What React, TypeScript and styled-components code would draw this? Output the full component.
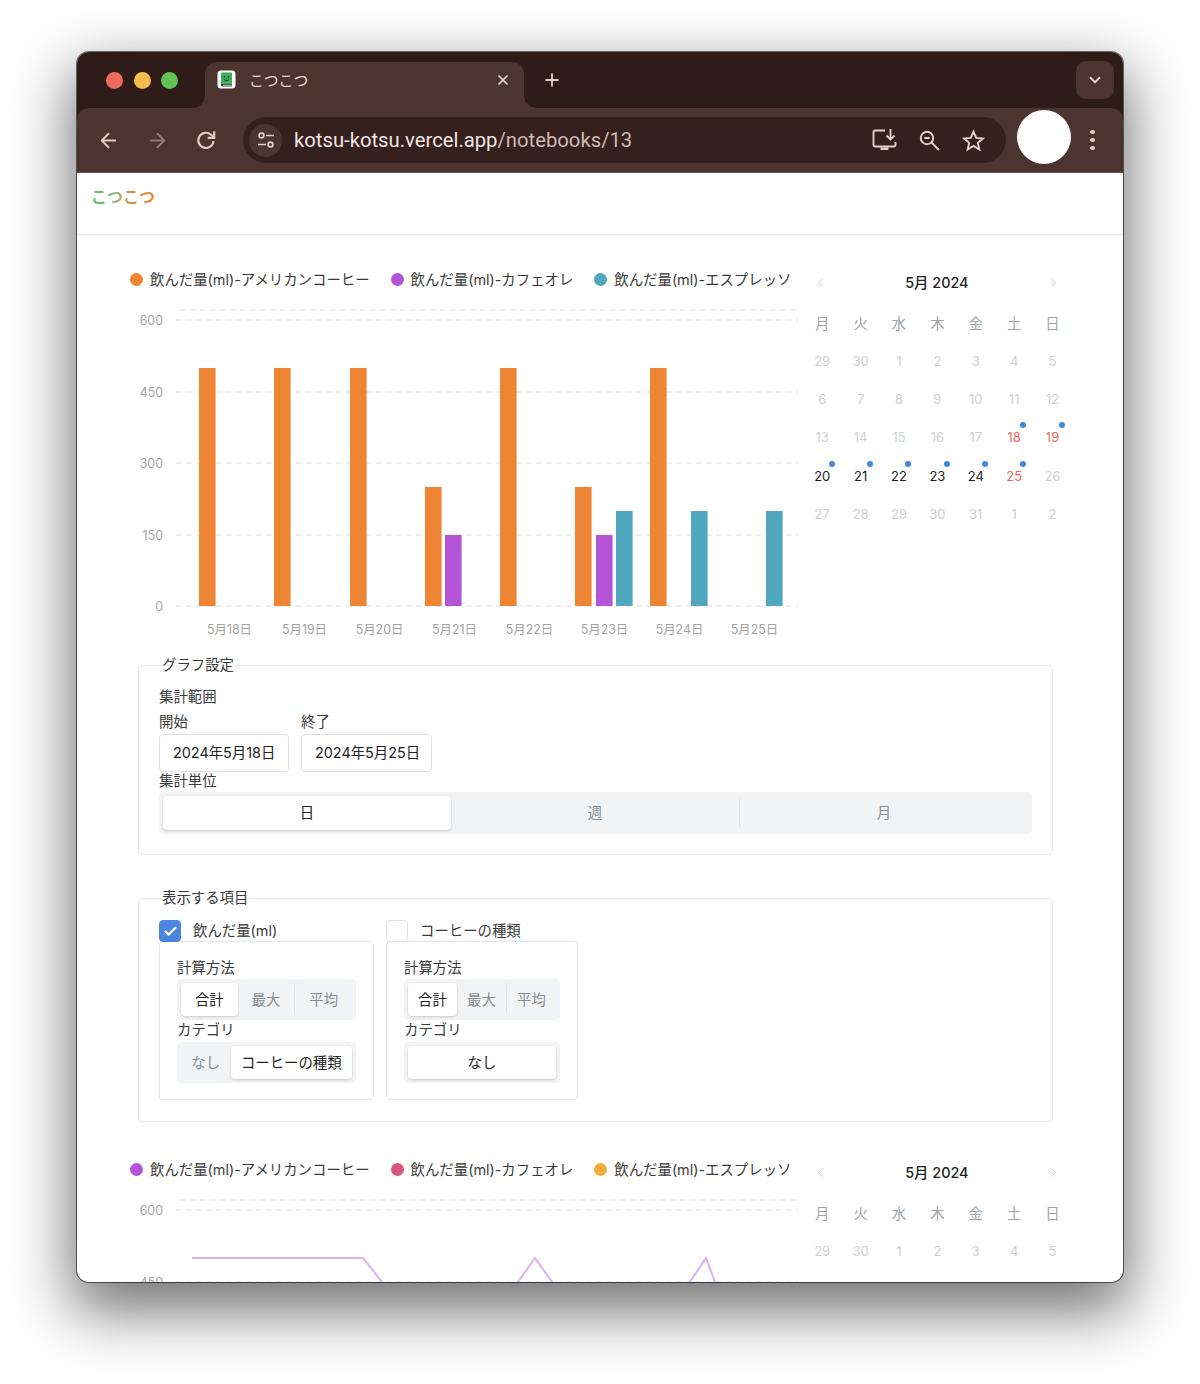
import type { ReactNode } from 'react';
import styled, { createGlobalStyle } from 'styled-components';
import {
  ArrowLeft,
  ArrowRight,
  Check,
  ChevronDown,
  ChevronLeft,
  ChevronRight,
  Plus,
  X,
} from 'lucide-react';

const FONT = `Inter, "Noto Sans CJK JP", sans-serif`;

const ORANGE = '#ee8535';
const PURPLE = '#b455d8';
const TEAL = '#4fa8bd';
const PINK = '#d9577f';
const YELLOW = '#f0ad3d';
const CHROME_DARK = '#2f1b18';
const CHROME = '#4c3431';

const GlobalStyle = createGlobalStyle`
  html, body {
    margin: 0;
    padding: 0;
    background: #ffffff;
    font-family: ${FONT};
  }
  * {
    box-sizing: border-box;
  }
`;

const Page = styled.div`
  width: 1200px;
  height: 1384px;
  padding: 52px 77px 102px;
  overflow: hidden;
`;

const BrowserWindow = styled.div`
  height: 1230px;
  border-radius: 12px;
  overflow: hidden;
  background: #ffffff;
  box-shadow: 0 0 0 1px rgba(0, 0, 0, 0.55), 0 24px 60px 6px rgba(0, 0, 0, 0.55);
`;

const ChromeFrame = styled.div`
  background: ${CHROME_DARK};
`;

const TitleBar = styled.div`
  height: 56px;
  display: flex;
  align-items: flex-start;
  padding: 10px 9px 0 29px;
`;

const Lights = styled.div`
  display: flex;
  gap: 10.5px;
  width: 99px;
  padding-top: 9.5px;
`;

const Light = styled.span<{ $color: string }>`
  width: 17px;
  height: 17px;
  border-radius: 50%;
  background: ${props => props.$color};
`;

const Tab = styled.div`
  position: relative;
  width: 319px;
  height: 46px;
  background: ${CHROME};
  border-radius: 12px 12px 0 0;
  display: flex;
  align-items: center;
  padding: 0 13px 11px 12px;
  color: #e8d8d4;

  &::before,
  &::after {
    content: '';
    position: absolute;
    bottom: 0;
    width: 12px;
    height: 12px;
  }
  &::before {
    left: -12px;
    background: radial-gradient(circle at 0 0, ${CHROME_DARK} 11.5px, ${CHROME} 12px);
  }
  &::after {
    right: -12px;
    background: radial-gradient(circle at 100% 0, ${CHROME_DARK} 11.5px, ${CHROME} 12px);
  }
`;

const TabTitle = styled.span`
  flex: 1;
  margin-left: 13px;
  font-size: 14.8px;
`;

const NewTab = styled.div`
  margin-left: 18px;
  height: 36px;
  display: flex;
  align-items: center;
  color: #e3cfca;
`;

const Spacer = styled.div`
  flex: 1;
`;

const ExpandButton = styled.div`
  width: 38px;
  height: 38px;
  margin-top: -1px;
  border-radius: 10px;
  background: ${CHROME};
  color: #e8d8d4;
  display: flex;
  align-items: center;
  justify-content: center;
`;

const Toolbar = styled.div`
  height: 65px;
  background: ${CHROME};
  border-bottom: 1px solid #6b5754;
  display: flex;
  align-items: center;
  padding: 0 19px;
  color: #e3cfca;
  border-radius: 12px 12px 0 0;
`;

const NavButton = styled.div<{ $dim?: boolean }>`
  width: 24px;
  height: 24px;
  margin-right: 25px;
  color: ${props => (props.$dim ? '#8f7a76' : '#e3c9c2')};
  display: flex;
  align-items: center;
  justify-content: center;
`;

const Omnibox = styled.div`
  width: 763px;
  height: 46px;
  border-radius: 23px;
  background: #35201e;
  display: flex;
  align-items: center;
  padding: 0 21px 0 6px;
`;

const SiteChip = styled.div`
  width: 33px;
  height: 33px;
  border-radius: 50%;
  background: ${CHROME};
  display: flex;
  align-items: center;
  justify-content: center;
`;

const Url = styled.div`
  flex: 1;
  margin-left: 12px;
  font-family: Roboto, sans-serif;
  font-size: 20.25px;
  color: #f2e6e3;
  white-space: nowrap;
`;

const UrlPath = styled.span`
  color: #cdb8b3;
`;

const OmniIcons = styled.div`
  display: flex;
  align-items: center;
  gap: 21px;
  color: #e3cfca;
`;

const Avatar = styled.div`
  width: 54px;
  height: 54px;
  margin: -6px 0 0 11px;
  border-radius: 50%;
  background: #ffffff;
`;

const MenuDots = styled.div`
  margin-left: 19px;
  display: flex;
  flex-direction: column;
  gap: 3.5px;
`;

const MenuDot = styled.span`
  width: 4.5px;
  height: 4.5px;
  border-radius: 50%;
  background: #e3c9c2;
`;

const SiteHeader = styled.header`
  height: 62px;
  padding: 13px 14px 0;
  border-bottom: 1px solid #e5e7eb;
`;

const Logo = styled.span`
  font-family: 'Noto Sans CJK JP', sans-serif;
  font-size: 16px;
  line-height: 20px;
  font-weight: 700;
  background: linear-gradient(90deg, #5cc05c 0%, #8fb98a 35%, #c69a4a 60%, ${ORANGE} 100%);
  -webkit-background-clip: text;
  background-clip: text;
  color: transparent;
  display: inline-block;
`;

const Main = styled.main`
  padding: 34px 52px 0 53px;
`;

const ChartRow = styled.section`
  display: flex;
  height: 376px;
`;

const ChartColumn = styled.div`
  width: 670px;
`;

const Legend = styled.div`
  display: flex;
  height: 21px;
  gap: 21px;
  font-size: 14.4px;
  line-height: 20px;
  color: #3a3a3a;
`;

const LegendItem = styled.div`
  display: flex;
  align-items: center;
  gap: 7px;
  white-space: nowrap;
`;

const LegendDot = styled.span<{ $color: string }>`
  width: 13px;
  height: 13px;
  border-radius: 50%;
  background: ${props => props.$color};
`;

const ChartSvg = styled.svg`
  display: block;
  margin-top: 10px;

  text {
    font-family: ${FONT};
    font-size: 12.4px;
    fill: #a3a3a3;
  }
`;

const Calendar = styled.div`
  width: 269px;
  margin-left: 3px;
`;

const CalendarHead = styled.div`
  display: flex;
  align-items: center;
  justify-content: space-between;
  height: 26px;
  padding: 0 11px 0 10px;
  color: #c4c8cc;
  margin-bottom: 20px;
`;

const CalendarTitle = styled.span`
  margin-bottom: 2px;
  font-size: 14.4px;
  font-weight: 500;
  color: #222222;
`;

const CalendarGrid = styled.div`
  display: grid;
  grid-template-columns: repeat(7, 38.4px);
  grid-auto-rows: 38.4px;
  margin-top: -1px;
`;

const Weekday = styled.div`
  font-size: 14.4px;
  color: #9ea3a8;
  text-align: center;
  line-height: 18px;
  height: 18px;
`;

const WeekdayRow = styled.div`
  display: grid;
  grid-template-columns: repeat(7, 38.4px);
  margin-bottom: 9.5px;
`;

type DayKind = 'out' | 'in' | 'weekend';

const Day = styled.div<{ $kind: DayKind }>`
  position: relative;
  display: flex;
  align-items: center;
  justify-content: center;
  font-size: 13px;
  color: ${props =>
    props.$kind === 'out' ? '#cdd0d3' : props.$kind === 'weekend' ? '#f0695a' : '#222222'};
`;

const DayDot = styled.span`
  position: absolute;
  top: 4px;
  left: 25.5px;
  width: 6px;
  height: 6px;
  border-radius: 50%;
  background: #3f86e4;
`;

const Settings = styled.fieldset<{ $height: number; $top: number }>`
  margin: ${props => props.$top}px 0 0 8px;
  width: 915px;
  height: ${props => props.$height}px;
  min-width: 0;
  padding: 0 20px;
  border: 1px solid #e5e7eb;
  border-radius: 4px;
`;

const SettingsTitle = styled.legend`
  margin-left: 3px;
  padding: 0 1px 0 0;
  font-size: 14.4px;
  line-height: 20px;
  color: #3a3a3a;
`;

const FieldLabel = styled.div<{ $h?: number }>`
  font-size: 14.4px;
  line-height: ${props => props.$h ?? 20}px;
  height: ${props => Math.max(props.$h ?? 20, 20)}px;
  color: #3a3a3a;
`;

const RangeGroup = styled.div`
  padding-top: 10px;
`;

const DateFields = styled.div`
  display: flex;
  gap: 12px;
`;

const DateInput = styled.div<{ $width: number }>`
  width: ${props => props.$width}px;
  height: 38px;
  padding-left: 13px;
  border: 1px solid #dee2e6;
  border-radius: 4px;
  font-size: 14.4px;
  line-height: 36px;
  color: #222222;
  white-space: nowrap;
`;

const Segmented = styled.div`
  display: flex;
  padding: 4px;
  border-radius: 4px;
  background: #f1f3f5;
`;

const Segment = styled.div<{ $active?: boolean; $sep?: boolean }>`
  flex: 1 1 auto;
  height: 33px;
  padding: 0 10px;
  border-radius: 4px;
  font-size: 14.4px;
  line-height: 33px;
  text-align: center;
  white-space: nowrap;
  color: ${props => (props.$active ? '#222222' : '#868e96')};
  background: ${props => (props.$active ? '#ffffff' : 'transparent')};
  box-shadow: ${props =>
    props.$active ? '0 1px 3px rgba(0, 0, 0, 0.1), 0 1px 2px rgba(0, 0, 0, 0.08)' : 'none'};
  border-left: ${props => (props.$sep ? '1px solid #e2e5e8' : 'none')};
`;

const FullSegment = styled(Segment)`
  flex: 1 1 0;
  height: 34px;
`;

const ItemColumns = styled.div`
  display: flex;
  gap: 12px;
  padding-top: 12px;
`;

const ItemColumn = styled.div<{ $width: number }>`
  width: ${props => props.$width}px;
`;

const CheckRow = styled.div`
  display: flex;
  align-items: center;
  gap: 12px;
  height: 22px;
  font-size: 14.4px;
  line-height: 20px;
  color: #3a3a3a;
`;

const CheckBox = styled.span<{ $checked?: boolean }>`
  width: 22px;
  height: 22px;
  border-radius: 4px;
  display: flex;
  align-items: center;
  justify-content: center;
  color: #ffffff;
  background: ${props => (props.$checked ? '#4a86e0' : '#ffffff')};
  border: 1px solid ${props => (props.$checked ? '#4a86e0' : '#dee2e6')};
`;

const ItemCard = styled.div`
  margin-top: -1px;
  height: 159px;
  padding: 16px 17px 0;
  border: 1px solid #e5e7eb;
  border-radius: 4px;
`;

const CardLabel = styled(FieldLabel)`
  height: 21.25px;
`;

const SecondRow = styled(ChartRow)`
  margin-top: 37px;
`;

type BarData = { x: number; top: number; color: string };

const BARS: BarData[] = [
  { x: 69, top: 368, color: ORANGE },
  { x: 144, top: 368, color: ORANGE },
  { x: 220, top: 368, color: ORANGE },
  { x: 295, top: 487, color: ORANGE },
  { x: 315, top: 535, color: PURPLE },
  { x: 370, top: 368, color: ORANGE },
  { x: 445, top: 487, color: ORANGE },
  { x: 466, top: 535, color: PURPLE },
  { x: 486, top: 511, color: TEAL },
  { x: 520, top: 368, color: ORANGE },
  { x: 561, top: 511, color: TEAL },
  { x: 636, top: 511, color: TEAL },
];

const Y_TICKS = [
  { label: '600', y: 20 },
  { label: '450', y: 92 },
  { label: '300', y: 163 },
  { label: '150', y: 235 },
  { label: '0', y: 306 },
];

const X_LABELS = ['5月18日', '5月19日', '5月20日', '5月21日', '5月22日', '5月23日', '5月24日', '5月25日'];

const GRID_LINE = { stroke: '#d9dce1', strokeWidth: 1.2, strokeDasharray: '5.5 4.5' };

// svg origin sits at page (130, 300)
const ChartFrame = ({ ticks, children }: { ticks: number; children?: ReactNode }) => (
  <ChartSvg width={670} height={345} viewBox="0 0 670 345">
    <line x1={50} x2={668} y1={10} y2={10} {...GRID_LINE} />
    {Y_TICKS.slice(0, ticks).map(t => (
      <g key={t.label}>
        <line x1={46} x2={668} y1={t.y} y2={t.y} {...GRID_LINE} />
        <text x={33} y={t.y + 4.5} textAnchor="end">
          {t.label}
        </text>
      </g>
    ))}
    {children}
  </ChartSvg>
);

const BarChart = () => (
  <ChartFrame ticks={5}>
    {BARS.map(b => (
      <rect key={b.x} x={b.x} y={b.top - 300} width={16.6} height={606 - b.top} fill={b.color} />
    ))}
    {X_LABELS.map((label, i) => (
      <text key={label} x={99.5 + i * 75} y={334} textAnchor="middle">
        {label}
      </text>
    ))}
  </ChartFrame>
);

const LineChart = () => (
  <ChartFrame ticks={2}>
    <polyline
      fill="none"
      stroke="#dfb0ee"
      strokeWidth={2}
      points="62,68 233,68 290,140 348,148 405,68 462,148 519,153 576,68 633,220"
    />
  </ChartFrame>
);

const LEGEND_LABELS = [
  '飲んだ量(ml)-アメリカンコーヒー',
  '飲んだ量(ml)-カフェオレ',
  '飲んだ量(ml)-エスプレッソ',
];

const ChartLegend = ({ colors }: { colors: string[] }) => (
  <Legend>
    {LEGEND_LABELS.map((label, i) => (
      <LegendItem key={label}>
        <LegendDot $color={colors[i]} />
        {label}
      </LegendItem>
    ))}
  </Legend>
);

const WEEKDAYS = ['月', '火', '水', '木', '金', '土', '日'];

type DayData = { n: number; kind: DayKind; dot?: boolean };

const out = (n: number): DayData => ({ n, kind: 'out' });

const DAYS: DayData[] = [
  ...[29, 30, 1, 2, 3, 4, 5, 6, 7, 8, 9, 10, 11, 12, 13, 14, 15, 16, 17].map(out),
  { n: 18, kind: 'weekend', dot: true },
  { n: 19, kind: 'weekend', dot: true },
  { n: 20, kind: 'in', dot: true },
  { n: 21, kind: 'in', dot: true },
  { n: 22, kind: 'in', dot: true },
  { n: 23, kind: 'in', dot: true },
  { n: 24, kind: 'in', dot: true },
  { n: 25, kind: 'weekend', dot: true },
  ...[26, 27, 28, 29, 30, 31, 1, 2].map(out),
];

const MonthCalendar = ({ weeks }: { weeks: number }) => (
  <Calendar>
    <CalendarHead>
      <ChevronLeft size={15} strokeWidth={1.5} />
      <CalendarTitle>5月 2024</CalendarTitle>
      <ChevronRight size={15} strokeWidth={1.5} />
    </CalendarHead>
    <WeekdayRow>
      {WEEKDAYS.map(w => (
        <Weekday key={w}>{w}</Weekday>
      ))}
    </WeekdayRow>
    <CalendarGrid>
      {DAYS.slice(0, weeks * 7).map((d, i) => (
        <Day key={i} $kind={d.kind}>
          {d.dot && <DayDot />}
          {d.n}
        </Day>
      ))}
    </CalendarGrid>
  </Calendar>
);

const TuneIcon = () => (
  <svg width="20" height="20" viewBox="0 0 20 20" fill="none" stroke="#e3cfca" strokeWidth="1.7">
    <circle cx="5.5" cy="5.5" r="2.4" />
    <line x1="10" y1="5.5" x2="18" y2="5.5" />
    <line x1="2" y1="14.5" x2="10" y2="14.5" />
    <circle cx="14.5" cy="14.5" r="2.4" />
  </svg>
);

const ReloadIcon = () => (
  <svg width="24" height="24" viewBox="0 0 24 24" fill="none" stroke="currentColor" strokeWidth="2.2">
    <path d="M19.5 13a7.6 7.6 0 1 1-2.4-6.2L20 9.5" />
    <path d="M20.2 3.2v6.6h-6.6" />
  </svg>
);

const InstallIcon = () => (
  <svg width="25" height="24" viewBox="0 0 25 24" fill="none" stroke="#e3cfca" strokeWidth="1.9">
    <path d="M13 2.5H3a1.5 1.5 0 0 0-1.5 1.5v13A1.5 1.5 0 0 0 3 18.5h19a1.5 1.5 0 0 0 1.5-1.5v-3" />
    <path d="M18.5 1v10M14.5 7.5l4 4 4-4" />
    <rect x="8.5" y="19.5" width="8" height="2.5" fill="#e3cfca" stroke="none" />
  </svg>
);

const ZoomIcon = () => (
  <svg width="23" height="23" viewBox="0 0 23 23" fill="none" stroke="#e3cfca" strokeWidth="2">
    <circle cx="9" cy="9" r="6.2" />
    <path d="M13.6 13.6L21 21" />
    <path d="M6.2 9h5.6" />
  </svg>
);

const StarIcon = () => (
  <svg width="23" height="23" viewBox="0 0 24 24" fill="none" stroke="#e3cfca" strokeWidth="2">
    <path d="M12 2.8l2.8 6.5 7 .6-5.3 4.6 1.6 6.9-6.1-3.7-6.1 3.7 1.6-6.9-5.3-4.6 7-.6z" />
  </svg>
);

const Favicon = () => (
  <svg width="19" height="19" viewBox="0 0 19 19">
    <rect x="0.5" y="0.5" width="18" height="18" rx="3.5" fill="#ffffff" />
    <rect x="4" y="2.5" width="11" height="11.5" rx="1" fill="#3fae5a" />
    <path d="M4 14h11v2.5H5.5A1.5 1.5 0 0 1 4 15z" fill="#2d3f36" />
    <rect x="6" y="14.8" width="9" height="0.9" fill="#d8dcd9" />
    <circle cx="7.5" cy="6.8" r="0.9" fill="#123a22" />
    <circle cx="11.5" cy="6.8" r="0.9" fill="#123a22" />
    <path d="M6.8 9.3c1.3 1.7 4.1 1.7 5.4 0" fill="none" stroke="#123a22" strokeWidth="1" />
  </svg>
);

const MetricFields = ({ categories }: { categories: ReactNode }) => (
  <ItemCard>
    <CardLabel>計算方法</CardLabel>
    <Segmented>
      <Segment $active>合計</Segment>
      <Segment>最大</Segment>
      <Segment $sep>平均</Segment>
    </Segmented>
    <CardLabel>カテゴリ</CardLabel>
    <Segmented>{categories}</Segmented>
  </ItemCard>
);

const App = () => (
  <>
    <GlobalStyle />
    <Page>
      <BrowserWindow>
        <ChromeFrame>
          <TitleBar>
            <Lights>
              <Light $color="#ee6a5f" />
              <Light $color="#f5bd4f" />
              <Light $color="#61c454" />
            </Lights>
            <Tab>
              <Favicon />
              <TabTitle>こつこつ</TabTitle>
              <X size={16} strokeWidth={2.6} />
            </Tab>
            <NewTab>
              <Plus size={20} strokeWidth={2.2} />
            </NewTab>
            <Spacer />
            <ExpandButton>
              <ChevronDown size={18} strokeWidth={2.4} />
            </ExpandButton>
          </TitleBar>
          <Toolbar>
            <NavButton>
              <ArrowLeft size={23} strokeWidth={2} />
            </NavButton>
            <NavButton $dim>
              <ArrowRight size={23} strokeWidth={2} />
            </NavButton>
            <NavButton>
              <ReloadIcon />
            </NavButton>
            <Omnibox>
              <SiteChip>
                <TuneIcon />
              </SiteChip>
              <Url>
                kotsu-kotsu.vercel.app<UrlPath>/notebooks/13</UrlPath>
              </Url>
              <OmniIcons>
                <InstallIcon />
                <ZoomIcon />
                <StarIcon />
              </OmniIcons>
            </Omnibox>
            <Avatar />
            <MenuDots>
              <MenuDot />
              <MenuDot />
              <MenuDot />
            </MenuDots>
          </Toolbar>
        </ChromeFrame>

        <SiteHeader>
          <Logo>こつこつ</Logo>
        </SiteHeader>

        <Main>
          <ChartRow>
            <ChartColumn>
              <ChartLegend colors={[ORANGE, PURPLE, TEAL]} />
              <BarChart />
            </ChartColumn>
            <MonthCalendar weeks={5} />
          </ChartRow>

          <Settings $top={10} $height={200}>
            <SettingsTitle>グラフ設定</SettingsTitle>
            <RangeGroup>
              <FieldLabel $h={24}>集計範囲</FieldLabel>
              <DateFields>
                <div>
                  <FieldLabel $h={25}>開始</FieldLabel>
                  <DateInput $width={130}>2024年5月18日</DateInput>
                </div>
                <div>
                  <FieldLabel $h={25}>終了</FieldLabel>
                  <DateInput $width={131}>2024年5月25日</DateInput>
                </div>
              </DateFields>
            </RangeGroup>
            <FieldLabel $h={18}>集計単位</FieldLabel>
            <Segmented>
              <FullSegment $active>日</FullSegment>
              <FullSegment>週</FullSegment>
              <FullSegment $sep>月</FullSegment>
            </Segmented>
          </Settings>

          <Settings $top={33} $height={234}>
            <SettingsTitle>表示する項目</SettingsTitle>
            <ItemColumns>
              <ItemColumn $width={215}>
                <CheckRow>
                  <CheckBox $checked>
                    <Check size={15} strokeWidth={3.5} />
                  </CheckBox>
                  飲んだ量(ml)
                </CheckRow>
                <MetricFields
                  categories={
                    <>
                      <Segment>なし</Segment>
                      <Segment $active>コーヒーの種類</Segment>
                    </>
                  }
                />
              </ItemColumn>
              <ItemColumn $width={192}>
                <CheckRow>
                  <CheckBox />
                  コーヒーの種類
                </CheckRow>
                <MetricFields categories={<Segment $active>なし</Segment>} />
              </ItemColumn>
            </ItemColumns>
          </Settings>

          <SecondRow>
            <ChartColumn>
              <ChartLegend colors={[PURPLE, PINK, YELLOW]} />
              <LineChart />
            </ChartColumn>
            <MonthCalendar weeks={1} />
          </SecondRow>
        </Main>
      </BrowserWindow>
    </Page>
  </>
);

export default App;
